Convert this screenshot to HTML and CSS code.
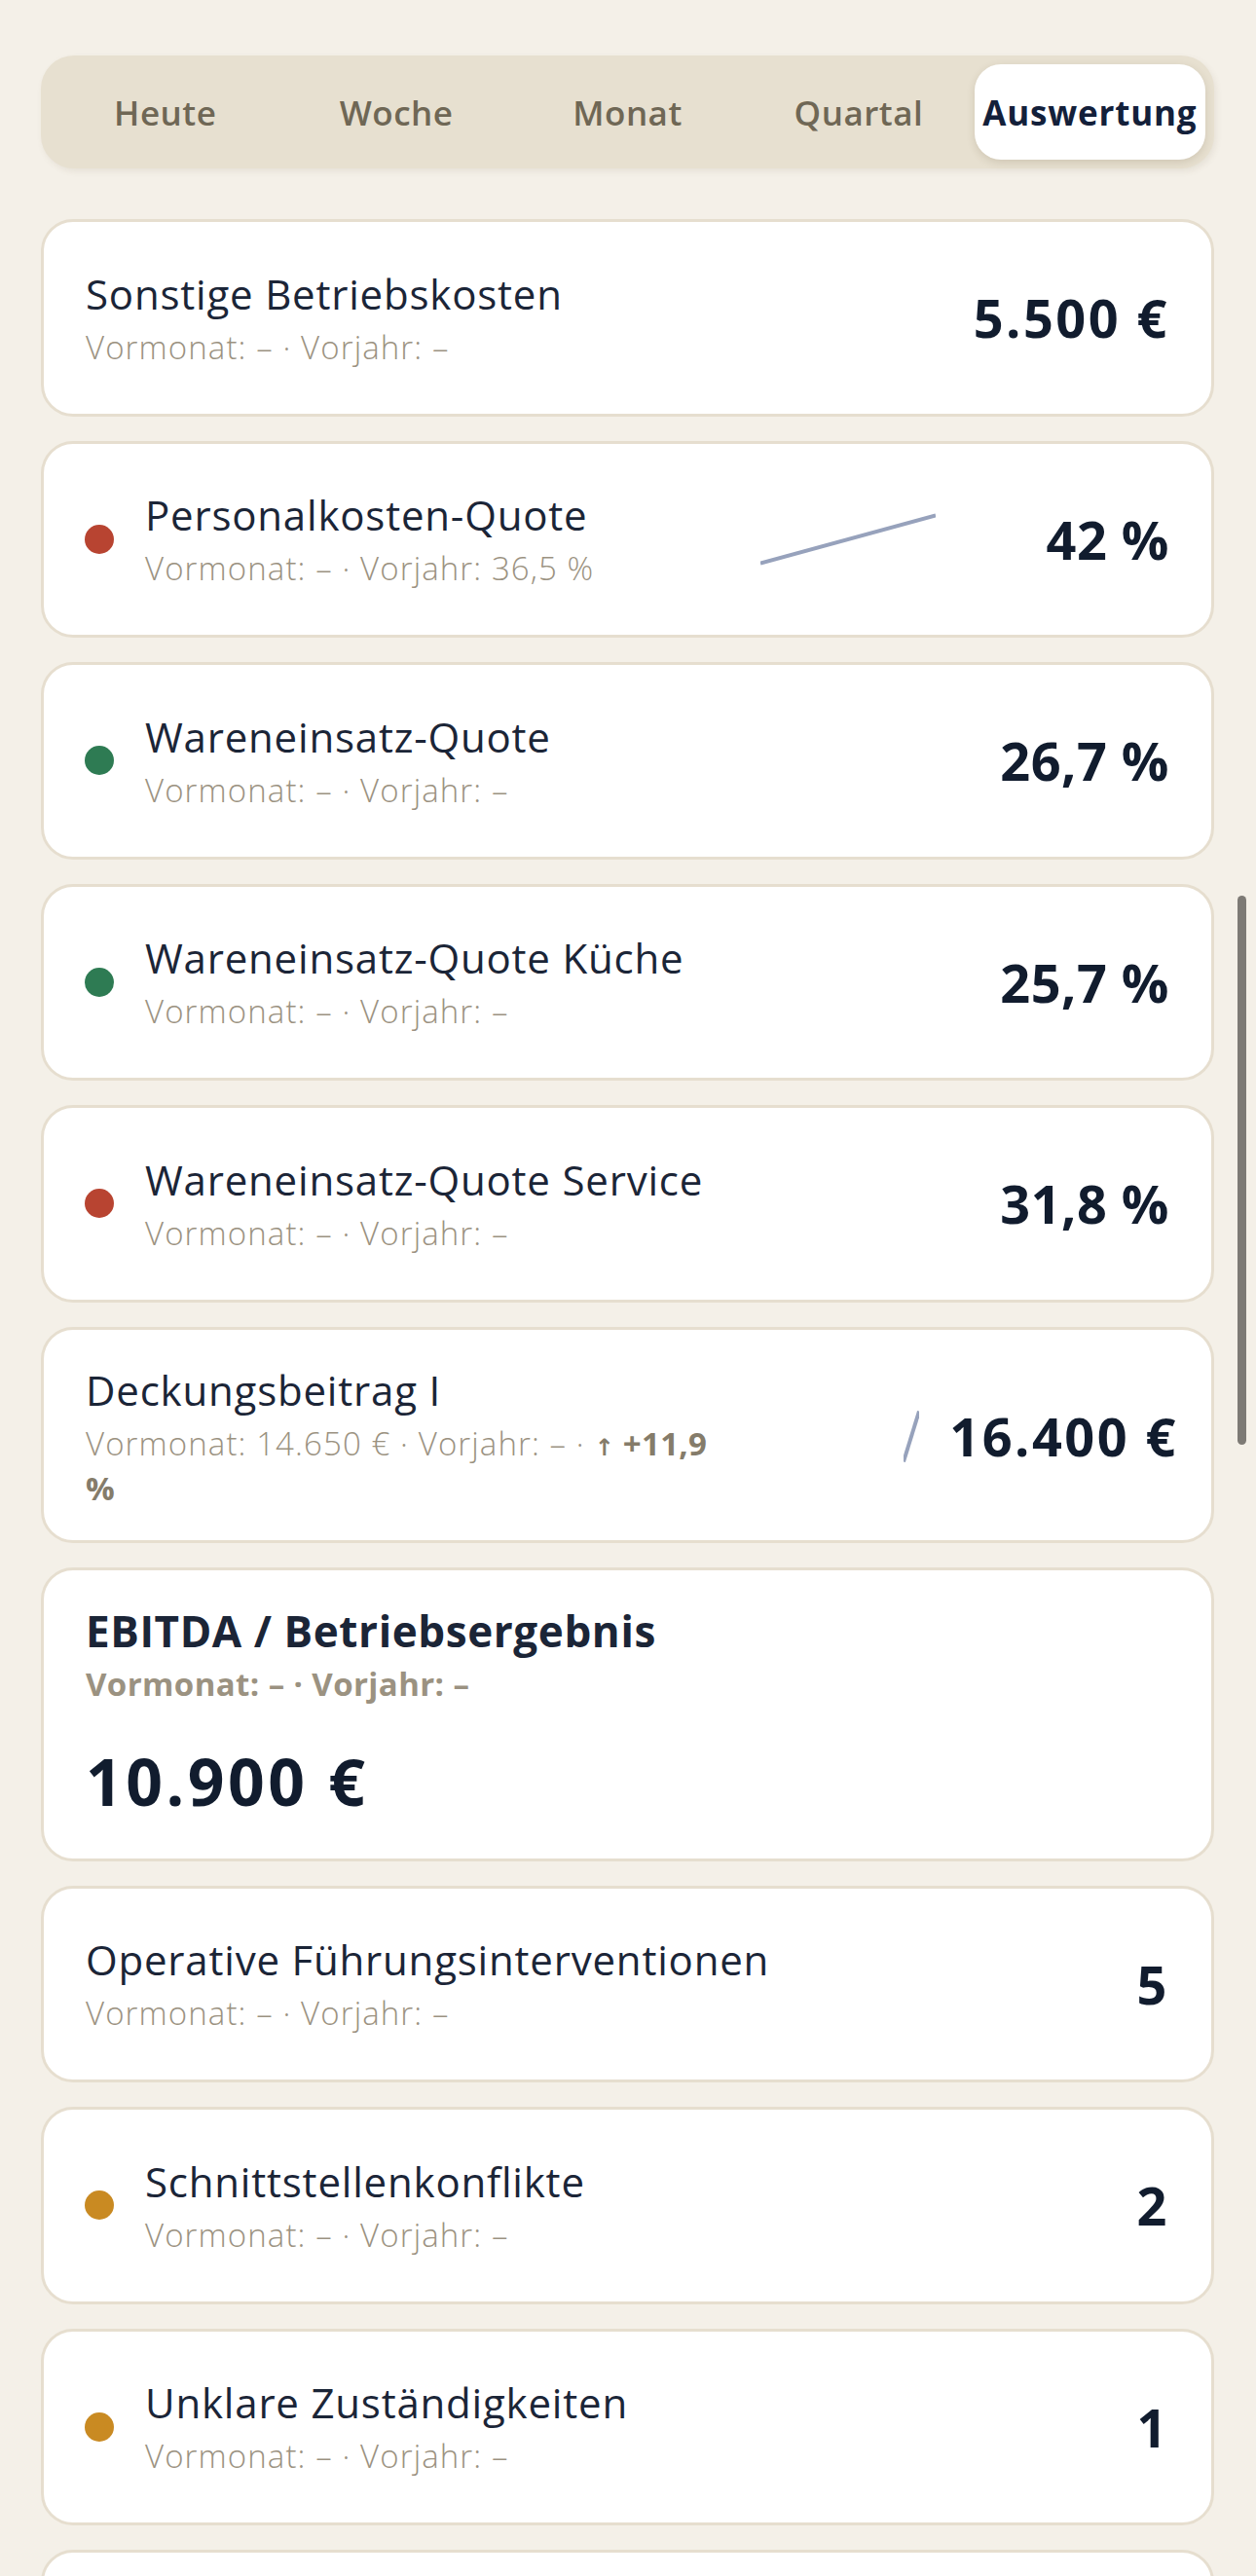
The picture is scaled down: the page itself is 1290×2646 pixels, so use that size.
FILE: index.html
```html
<!DOCTYPE html>
<html lang="de">
<head>
<meta charset="utf-8">
<title>Auswertung</title>
<link rel="stylesheet" href="styles.css">
</head>
<body>
<div class="screen">
  <nav class="tabs">
    <div class="tab">Heute</div>
    <div class="tab">Woche</div>
    <div class="tab">Monat</div>
    <div class="tab">Quartal</div>
    <div class="tab tab--active">Auswertung</div>
  </nav>

  <div class="list">
    <div class="card">
      <div class="info">
        <div class="title">Sonstige Betriebskosten</div>
        <div class="sub">Vormonat: – · Vorjahr: –</div>
      </div>
      <div class="value">5.500 €</div>
    </div>

    <div class="card">
      <span class="dot dot--red"></span>
      <div class="info">
        <div class="title">Personalkosten-Quote</div>
        <div class="sub">Vormonat: – · Vorjahr: 36,5 %</div>
      </div>
      <svg class="spark" viewBox="0 0 100 60" preserveAspectRatio="none"><line x1="0" y1="54.5" x2="100" y2="5.5" stroke="#97A2BC" stroke-width="4" vector-effect="non-scaling-stroke"/></svg>
      <div class="value value--pct">42 %</div>
    </div>

    <div class="card">
      <span class="dot dot--green"></span>
      <div class="info">
        <div class="title">Wareneinsatz-Quote</div>
        <div class="sub">Vormonat: – · Vorjahr: –</div>
      </div>
      <div class="value value--pct">26,7 %</div>
    </div>

    <div class="card">
      <span class="dot dot--green"></span>
      <div class="info">
        <div class="title">Wareneinsatz-Quote Küche</div>
        <div class="sub">Vormonat: – · Vorjahr: –</div>
      </div>
      <div class="value value--pct">25,7 %</div>
    </div>

    <div class="card">
      <span class="dot dot--red"></span>
      <div class="info">
        <div class="title">Wareneinsatz-Quote Service</div>
        <div class="sub">Vormonat: – · Vorjahr: –</div>
      </div>
      <div class="value value--pct">31,8 %</div>
    </div>

    <div class="card card--wrap">
      <div class="info">
        <div class="title">Deckungsbeitrag I</div>
        <div class="sub sub--nowrap">Vormonat: 14.650 € · Vorjahr: – · <span class="trend"><span class="trend-arrow">↑</span> +11,9</span><br><span class="trend">%</span></div>
      </div>
      <svg class="spark spark--narrow" viewBox="0 0 100 60" preserveAspectRatio="none"><line x1="0" y1="56.5" x2="100" y2="4.5" stroke="#97A2BC" stroke-width="4" vector-effect="non-scaling-stroke"/></svg>
      <div class="value value--overflow">16.400 €</div>
    </div>

    <div class="card card--hero">
      <div class="title title--hero">EBITDA / Betriebsergebnis</div>
      <div class="sub sub--hero">Vormonat: – · Vorjahr: –</div>
      <div class="value value--hero">10.900 €</div>
    </div>

    <div class="card">
      <div class="info">
        <div class="title">Operative Führungsinterventionen</div>
        <div class="sub">Vormonat: – · Vorjahr: –</div>
      </div>
      <div class="value">5</div>
    </div>

    <div class="card">
      <span class="dot dot--amber"></span>
      <div class="info">
        <div class="title">Schnittstellenkonflikte</div>
        <div class="sub">Vormonat: – · Vorjahr: –</div>
      </div>
      <div class="value">2</div>
    </div>

    <div class="card">
      <span class="dot dot--amber"></span>
      <div class="info">
        <div class="title">Unklare Zuständigkeiten</div>
        <div class="sub">Vormonat: – · Vorjahr: –</div>
      </div>
      <div class="value">1</div>
    </div>

    <div class="card">
      <div class="info">
        <div class="title">&nbsp;</div>
        <div class="sub">&nbsp;</div>
      </div>
    </div>
  </div>

  <div class="scrollbar"></div>
</div>
</body>
</html>
```

FILE: styles.css
```css
html, body {
  margin: 0;
  padding: 0;
  height: 2646px;
  overflow: hidden;
  background: #F4F0E8;
}

body {
  font-family: "Open Sans", "Noto Sans", "DejaVu Sans", sans-serif;
  color: #1B2537;
}

.screen {
  padding: 57px 43px 0 42px;
}

/* Tabs */
.tabs {
  display: flex;
  padding: 9px;
  height: 116px;
  box-sizing: border-box;
  background: #E7E0D0;
  border-radius: 34px;
  box-shadow: 2px 3px 6px rgba(120, 100, 70, 0.10);
}

.tab {
  flex: 1;
  display: flex;
  align-items: center;
  justify-content: center;
  font-size: 35px;
  font-weight: 600;
  letter-spacing: 0.5px;
  color: #6F6755;
  border-radius: 27px;
}

.tab--active {
  background: #FFFFFF;
  color: #13203A;
  font-weight: 700;
  letter-spacing: 0.8px;
  box-shadow: 0 3px 9px rgba(90, 70, 40, 0.16);
}

/* List */
.list {
  margin-top: 52px;
  display: flex;
  flex-direction: column;
  gap: 25px;
}

.card {
  display: flex;
  align-items: center;
  box-sizing: border-box;
  min-height: 202.5px;
  padding: 35px 43px;
  background: #FFFFFF;
  border: 3px solid #E6DECF;
  border-radius: 33px;
}

.card--wrap {
  padding-bottom: 32px;
}

.dot {
  flex-shrink: 0;
  width: 30px;
  height: 30px;
  border-radius: 50%;
  margin-left: -1px;
  margin-right: 32px;
}

.dot--red { background: #B84431; }
.dot--green { background: #2E7B53; }
.dot--amber { background: #C98A22; }

.info {
  flex: 1;
  min-width: 0;
}

.title {
  font-size: 42px;
  line-height: 54px;
  font-weight: 400;
  letter-spacing: 0.8px;
  color: #1B2537;
  white-space: nowrap;
}

.sub {
  margin-top: 6px;
  font-size: 33px;
  line-height: 43px;
  font-weight: 300;
  letter-spacing: 1.1px;
  color: #9B9281;
}

.sub--nowrap {
  white-space: nowrap;
}

.trend {
  font-weight: 700;
  color: #857C6A;
  letter-spacing: 0.3px;
}

.trend-arrow {
  font-size: 24px;
}

.spark {
  flex-shrink: 0;
  width: 180px;
  height: 60px;
}

.spark--narrow {
  width: 16px;
  margin-right: 31px;
}

.value {
  flex-shrink: 0;
  min-width: 240px;
  text-align: right;
  white-space: nowrap;
  font-size: 54px;
  line-height: 64px;
  font-weight: 700;
  letter-spacing: 2.5px;
  color: #111C2E;
}

.value--pct {
  letter-spacing: 0.5px;
}

.value--overflow {
  min-width: 0;
  margin-right: -9px;
}

/* Hero card */
.card--hero {
  display: block;
  padding: 35px 43px 40px;
}

.title--hero {
  font-size: 44px;
  font-weight: 700;
  letter-spacing: 0.6px;
}

.sub--hero {
  font-weight: 700;
  letter-spacing: 0.4px;
}

.value--hero {
  min-width: 0;
  text-align: left;
  margin-top: 38px;
  font-size: 66px;
  line-height: 80px;
  letter-spacing: 3.5px;
}

/* Overlay scrollbar */
.scrollbar {
  position: fixed;
  top: 920px;
  right: 10px;
  width: 9px;
  height: 564px;
  border-radius: 5px;
  background: #7D7A75;
}
```
